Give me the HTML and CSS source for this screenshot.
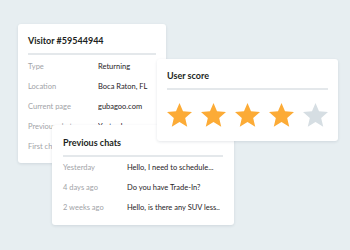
FILE: index.html
```html
<!DOCTYPE html>
<html>
<head>
<meta charset="utf-8">
<link rel="stylesheet" href="styles.css">
</head>
<body>
<div class="canvas">
  <div class="card visitor">
    <div class="title">Visitor #59544944</div>
    <div class="sep"></div>
    <div class="rows v-rows">
      <span class="lbl">Type</span><span class="val">Returning</span>
      <span class="lbl">Location</span><span class="val">Boca Raton, FL</span>
      <span class="lbl">Current page</span><span class="val">gubagoo.com</span>
      <span class="lbl">Previous chat</span><span class="val">Yesterday</span>
      <span class="lbl">First chat</span><span class="val">2 weeks ago</span>
    </div>
  </div>
  <div class="card chats">
    <div class="title">Previous chats</div>
    <div class="sep"></div>
    <div class="rows c-rows">
      <span class="lbl">Yesterday</span><span class="val">Hello, I need to schedule...</span>
      <span class="lbl">4 days ago</span><span class="val">Do you have Trade-In?</span>
      <span class="lbl">2 weeks ago</span><span class="val">Hello, is there any SUV less..</span>
    </div>
  </div>
  <div class="card score">
    <div class="title">User score</div>
    <div class="sep"></div>
    <div class="stars">
      <svg class="star on" viewBox="2 2 20 19"><path d="M12 17.27L18.18 21l-1.64-7.03L22 9.24l-7.19-.61L12 2 9.19 8.63 2 9.24l5.46 4.73L5.82 21z"/></svg>
      <svg class="star on" viewBox="2 2 20 19"><path d="M12 17.27L18.18 21l-1.64-7.03L22 9.24l-7.19-.61L12 2 9.19 8.63 2 9.24l5.46 4.73L5.82 21z"/></svg>
      <svg class="star on" viewBox="2 2 20 19"><path d="M12 17.27L18.18 21l-1.64-7.03L22 9.24l-7.19-.61L12 2 9.19 8.63 2 9.24l5.46 4.73L5.82 21z"/></svg>
      <svg class="star on" viewBox="2 2 20 19"><path d="M12 17.27L18.18 21l-1.64-7.03L22 9.24l-7.19-.61L12 2 9.19 8.63 2 9.24l5.46 4.73L5.82 21z"/></svg>
      <svg class="star off" viewBox="2 2 20 19"><path d="M12 17.27L18.18 21l-1.64-7.03L22 9.24l-7.19-.61L12 2 9.19 8.63 2 9.24l5.46 4.73L5.82 21z"/></svg>
    </div>
  </div>
</div>
</body>
</html>
```
FILE: styles.css
```css
* { box-sizing: border-box; }
html, body { margin: 0; padding: 0; }
body {
  background: #e7eef1;
  font-family: Lato, "Open Sans", sans-serif;
  width: 350px;
  height: 250px;
  overflow: hidden;
}
.canvas { position: relative; width: 350px; height: 250px; }
.card {
  position: absolute;
  background: #fff;
  border-radius: 3px;
  box-shadow: 0 1px 3px rgba(40, 60, 80, 0.12);
  padding: 10px 10px 0 10px;
  overflow: hidden;
}
.visitor { left: 18px; top: 24px; width: 148px; height: 139px; }
.chats { left: 52px; top: 125px; width: 182px; height: 100px; padding: 11px 11px 0 11px; }
.score { left: 157px; top: 59px; width: 181px; height: 82px; }
.title {
  font-size: 9px;
  font-weight: 700;
  color: #1c1f22;
  line-height: 14px;
  height: 14px;
}
.sep {
  height: 2px;
  background: #e4e8eb;
  margin-top: 5px;
}
.rows {
  display: grid;
  margin-top: 2px;
  font-size: 7.5px;
  line-height: 20px;
  white-space: nowrap;
}
.v-rows { grid-template-columns: 70px 1fr; }
.c-rows { grid-template-columns: 64px 1fr; margin-top: 1px; }
.lbl { color: #9fa3a7; }
.val { color: #1f2326; overflow: hidden; }
.stars {
  display: flex;
  gap: 9px;
  margin-top: 13px;
}
.star { width: 25px; height: 23.75px; display: block; }
.star.on { fill: #fcab36; }
.star.off { fill: #d6dee3; }
```
